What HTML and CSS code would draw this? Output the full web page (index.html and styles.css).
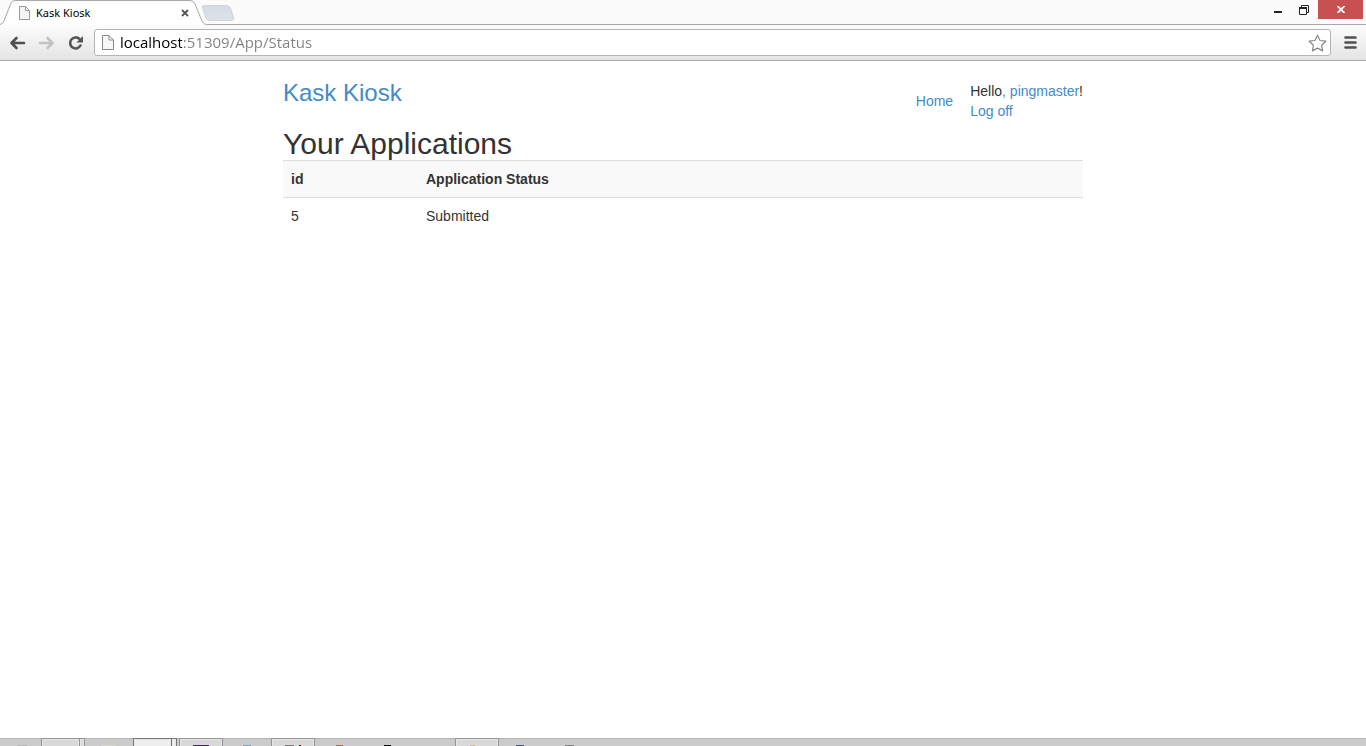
FILE: index.html
```html
<!DOCTYPE html>
<html lang="en">
<head>
<meta charset="utf-8">
<title>Kask Kiosk</title>
<link rel="stylesheet" href="styles.css">
</head>
<body>
<div class="tabstrip">
  <div class="tab">
    <svg class="tab-shape" viewBox="0 0 240 25" width="240" height="25" aria-hidden="true">
      <defs><linearGradient id="newtab" x1="0" y1="0" x2="0" y2="1"><stop offset="0" stop-color="#d5dbe4"/><stop offset="1" stop-color="#dde2e9"/></linearGradient></defs>
      <path d="M204 5.500H226Q229.500 5.500 230.500 8L233.500 17Q234.500 20.500 231 20.500H210.500Q207 20.500 206 18L202.500 8Q202 5.500 204 5.500Z" fill="url(#newtab)" stroke="#d0d4da"/>
      <path d="M0 25V24.500Q3 24 4 21L10.500 4Q12 .5 15 .5H190Q193.500 .5 195 4L201.500 20Q203 24.500 207 24.500V25Z" fill="#fff"/>
      <path d="M0 24.500Q3 24 4 21L10.500 4Q12 .5 15 .5H190Q193.500 .5 195 4L201.500 20Q203 24.500 207 24.500" fill="none" stroke="#a8a8a8"/>
    </svg>
    <svg class="tab-icon" viewBox="0 0 12 14" width="12" height="14" aria-hidden="true"><path d="M.5.5H6.500L10.500 4.500V13.500H.5ZM6.500 .5V4.500H10.500" fill="#f5f5f5" stroke="#999"/></svg>
    <span class="tab-title">Kask Kiosk</span>
    <button class="plain tab-close" aria-label="Close tab"><svg viewBox="0 0 8 8" width="8" height="8"><path d="M1 1L7 7M7 1L1 7" stroke="#555" stroke-width="1.800"/></svg></button>
  </div>
  <div class="window-controls">
    <button class="plain control" aria-label="Minimize"><svg viewBox="0 0 8 11" width="8" height="11"><path d="M0 7H8V9H0Z" fill="#222"/></svg></button>
    <button class="plain control restore" aria-label="Restore"><svg viewBox="0 0 10 10" width="10" height="10"><path d="M2.500 2V.5H9.500V7.500H8" fill="none" stroke="#222"/><path d="M.5 3V9.500H7.500V3" fill="none" stroke="#222"/><path d="M0 2H8V4H0Z" fill="#222"/></svg></button>
    <button class="plain control close" aria-label="Close"><svg viewBox="0 0 8 7" width="8" height="7"><path d="M.5 0L7.500 7M7.500 0L.5 7" stroke="#fff" stroke-width="1.800"/></svg></button>
  </div>
</div>
<div class="toolbar">
  <button class="plain nav-button" aria-label="Back"><svg viewBox="0 0 17 14" width="17" height="14"><path d="M15 7H3M7.500 2L2.500 7L7.500 12" fill="none" stroke="#505050" stroke-width="2.600" stroke-linecap="round" stroke-linejoin="round"/></svg></button>
  <button class="plain nav-button" aria-label="Forward"><svg viewBox="0 0 17 14" width="17" height="14"><path d="M2 7H14M9.500 2L14.500 7L9.500 12" fill="none" stroke="#c3c3c3" stroke-width="2.600" stroke-linecap="round" stroke-linejoin="round"/></svg></button>
  <button class="plain nav-button" aria-label="Reload"><svg viewBox="0 0 16 16" width="16" height="16"><path d="M11.500 4A5.500 5.500 0 1 0 12.500 10.500" fill="none" stroke="#555" stroke-width="2.600" stroke-linecap="round"/><path d="M15 1V7.500H8.500Z" fill="#555"/></svg></button>
  <div class="omnibox">
    <svg viewBox="0 0 12 15" width="12" height="15" aria-hidden="true"><path d="M.5.5H7L11.500 5V14.500H.5ZM7 .5V5H11.500" fill="#f7f7f7" stroke="#888"/></svg>
    <input class="address" type="text" aria-label="Address" value="localhost:51309/App/Status">
    <button class="plain bookmark" aria-label="Bookmark this page"><svg viewBox="0 0 19 18" width="19" height="18"><path d="M9.500 1.200L12 6.500L17.800 7.200L13.600 11.200L14.600 16.900L9.500 14.100L4.400 16.900L5.400 11.200L1.200 7.200L7 6.500Z" fill="#fff" stroke="#888" stroke-width="1.200" stroke-linejoin="round"/></svg></button>
  </div>
  <button class="plain menu" aria-label="Menu"><svg viewBox="0 0 13 13" width="13" height="13"><path d="M1.500 1.500H11.500M1.500 6.500H11.500M1.500 11.500H11.500" stroke="#505050" stroke-width="2.600" stroke-linecap="round"/></svg></button>
</div>
<div class="page">
  <header class="header">
    <a class="brand" href="#">Kask Kiosk</a>
    <nav class="nav">
      <a href="#">Home</a>
      <div class="account">
        <div>Hello<a href="#">, pingmaster</a>!</div>
        <a href="#">Log off</a>
      </div>
    </nav>
  </header>
  <main>
    <h1 class="title">Your Applications</h1>
    <table class="applications">
      <thead><tr><th class="id-column" scope="col">id</th><th scope="col">Application Status</th></tr></thead>
      <tbody><tr><td>5</td><td>Submitted</td></tr></tbody>
    </table>
  </main>
</div>
<div class="taskbar">
  <svg viewBox="0 0 600 8" width="600" height="8" aria-hidden="true">
    <g fill="#d9d9d9" stroke="#939393"><path d="M41.500 9V.5H84.500V9M79.500 1V9"/><path d="M179.500 9V.5H222.500V9"/><path d="M271.500 9V.5H314.500V9"/><path d="M455.500 9V.5H498.500V9"/></g>
    <path d="M133.500 9V.5H176.500V9" fill="#eee" stroke="#777"/><path d="M171.500 1V9" stroke="#777"/>
    <path d="M42.500 8V1.500H78.500V8M80.500 8V1.500H83.500V8M134.500 8V1.500H170.500V8M172.500 8V1.500H175.500V8M180.500 8V1.500H221.500V8M272.500 8V1.500H313.500V8M456.500 8V1.500H497.500V8" fill="none" stroke="#e6e6e6"/>
    <path d="M18 7H27V8H18Z" fill="#b5b5b5"/><path d="M101 7H116V8H101Z" fill="#d8d5cf"/><path d="M193 7H209V8H193Z" fill="#42206b"/><path d="M243 7H251V8H243Z" fill="#75a6c5"/><path d="M285 7H294V8H285Z" fill="#777"/><path d="M299 7H301V8H299Z" fill="#7b0000"/><path d="M336 7H343V8H336Z" fill="#c45a31"/><path d="M384 7H391V8H384Z" fill="#000"/><path d="M470 7H475V8H470Z" fill="#cbbd8e"/><path d="M516 7H524V8H516Z" fill="#275c9d"/><path d="M565 7H574V8H565Z" fill="#808080"/>
  </svg>
</div>
</body>
</html>
```
FILE: styles.css
```css
* { box-sizing: border-box; }
body {
  display: flex;
  flex-direction: column;
  min-height: 100vh;
  margin: 0;
  background: #fff;
  color: #333;
  font: 14px/20px "Liberation Sans", Arial, sans-serif;
}
a { color: #428bca; text-decoration: none; }
svg { display: block; flex: none; }
.plain {
  display: flex;
  align-items: center;
  justify-content: center;
  padding: 0;
  border: 0;
  background: transparent;
}
.tabstrip {
  display: flex;
  justify-content: space-between;
  height: 25px;
  background: #fbfbfb;
  border-bottom: 1px solid #a8a8a8;
}
.tab {
  position: relative;
  display: flex;
  align-items: center;
  width: 204px;
  height: 25px;
  padding: 0 14px 0 19px;
}
.tab-shape { position: absolute; top: 0; left: 0; }
.tab-icon, .tab-title, .tab-close { position: relative; }
.tab-title {
  flex: 1;
  margin-left: 5px;
  color: #000;
  font: 11px/16px "Noto Sans", "Open Sans", sans-serif;
}
.tab-close { width: 10px; height: 12px; }
.window-controls { display: flex; padding-right: 3px; }
.control { width: 26px; height: 19px; }
.control.close { width: 45px; background: #c75050; }
.control.restore { margin-right: 1px; }
.toolbar {
  display: flex;
  align-items: center;
  height: 36px;
  padding: 0 9px;
  background: linear-gradient(#fcfcfc, #e4e4e4);
  border-bottom: 1px solid #a6a6a6;
}
.nav-button { width: 17px; height: 24px; margin-right: 12px; }
.omnibox {
  display: flex;
  flex: 1;
  align-items: center;
  height: 27px;
  margin-left: -2px;
  padding: 0 3px 0 7px;
  background: #fff;
  border: 1px solid #b5b5b5;
  border-radius: 3px;
}
.address {
  flex: 1;
  min-width: 0;
  height: 22px;
  margin-left: 6px;
  padding: 0 0 2px;
  border: 0;
  outline: 0;
  background: linear-gradient(to right, #000 62px, #808080 62px);
  background-clip: text;
  -webkit-background-clip: text;
  color: transparent;
  font: 15px/20px "Open Sans", "Noto Sans", sans-serif;
}
.menu { width: 13px; height: 24px; margin-left: 13px; }
.page {
  flex: 1;
  width: 100%;
  max-width: 800px;
  margin: 0 auto;
  padding-top: 20px;
}
.header { display: flex; align-items: flex-start; justify-content: space-between; }
.brand { font-size: 24px; line-height: 24px; }
.nav { display: flex; align-items: flex-start; gap: 17px; }
.nav > a { margin-top: 10px; }
.title {
  margin: 6px 0 0;
  font-size: 30px;
  font-weight: 400;
  line-height: 33px;
}
.applications { width: 100%; border-collapse: collapse; table-layout: fixed; }
.applications th, .applications td {
  padding: 8px;
  border-top: 1px solid #ddd;
  text-align: left;
}
.applications th { background: #f9f9f9; }
.id-column { width: 135px; }
.taskbar { height: 8px; overflow: hidden; background: #cbcbcb; box-shadow: inset 0 1px #b2b2b2; }
```
